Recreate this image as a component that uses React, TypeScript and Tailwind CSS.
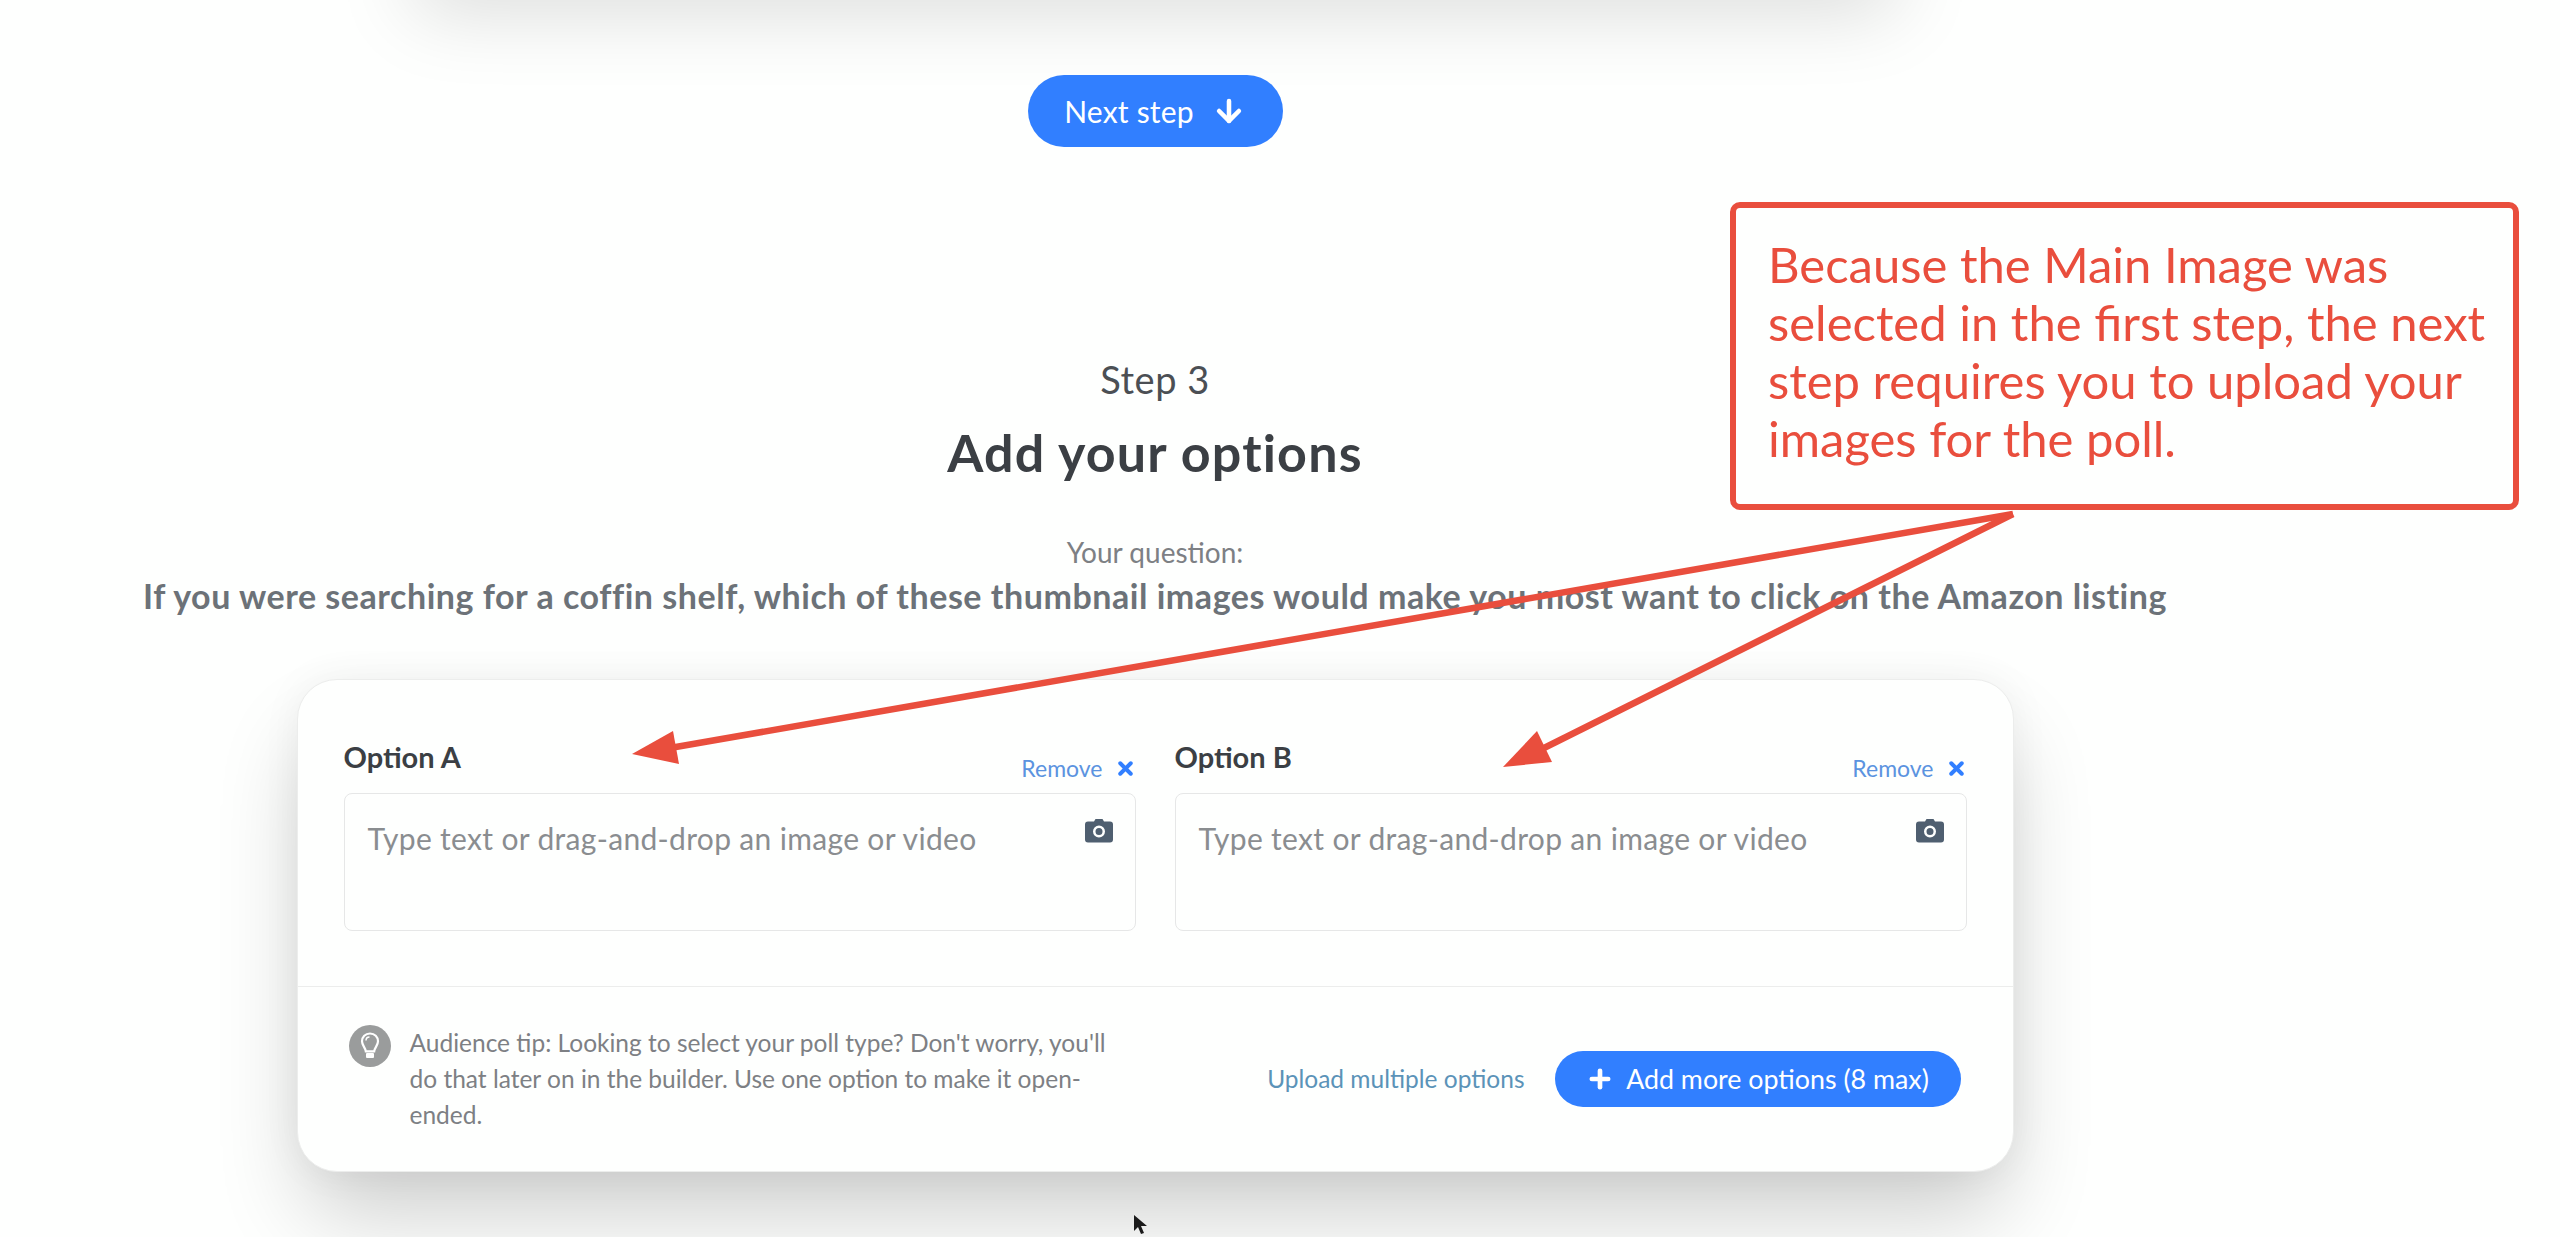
import { ArrowDown, Plus, X } from "lucide-react";

function Camera() {
  return (
    <svg width="28" height="25" viewBox="0 0 28 25" className="shrink-0">
      <path
        fill="#4f5f70"
        fillRule="evenodd"
        d="M9 3.5 10.5 1h7L19 3.5h6A3 3 0 0 1 28 6.500v15a3 3 0 0 1-3 3H3a3 3 0 0 1-3-3v-15a3 3 0 0 1 3-3h6ZM14 7.500a6 6 0 1 0 0 12 6 6 0 0 0 0-12Zm0 2.500a3.500 3.500 0 1 1 0 7 3.500 3.500 0 0 1 0-7Z"
      />
    </svg>
  );
}

function Bulb() {
  return (
    <svg width="42" height="42" viewBox="0 0 42 42" className="shrink-0">
      <circle cx="21" cy="21" r="21" fill="#9a9c9c" />
      <path
        d="M21 8.500c-4.700 0-8 3.500-8 7.800 0 4 3.200 6 3.800 10h8.400c.6-4 3.800-6 3.800-10 0-4.300-3.300-7.800-8-7.800Z"
        fill="none"
        stroke="#fff"
        strokeWidth="2.200"
      />
      <rect x="17" y="28" width="8" height="5" rx="1" fill="#fff" />
      <path d="M17 15.500c0-2 1.500-3.500 3.500-3.500" fill="none" stroke="#fff" strokeWidth="1.500" />
    </svg>
  );
}

function OptionField({ name }: { name: string }) {
  return (
    <div>
      <div className="flex h-[54px] items-start justify-between">
        <span className="text-[29px] leading-[36px] font-bold text-[#3b3f44]">{name}</span>
        <span className="mt-[14px] flex items-center gap-[12px] text-[23px] leading-[30px] text-[#5b93e0]">
          Remove
          <X size={21} strokeWidth={4.5} className="text-[#317fff]" />
        </span>
      </div>
      <div className="flex h-[138px] items-start justify-between rounded-[8px] border border-[#e6e7e7] pt-[24px] pr-[22px] pl-[23px]">
        <span className="text-[30px] leading-[40px] tracking-[0.33px] text-[#8a8d90]">
          Type text or drag-and-drop an image or video
        </span>
        <Camera />
      </div>
    </div>
  );
}

export default function App() {
  return (
    <div className="relative h-[1237px] w-[2560px] overflow-hidden bg-[#fefffe] font-['Lato',sans-serif]">
      <div className="flex w-[2310px] flex-col items-center">
        {/* bottom edge of the previous step's card, above the fold */}
        <div className="mt-[-130px] h-[100px] w-[1500px] shadow-[0_50px_80px_-10px_rgba(0,0,0,0.15)]" />

        <button className="mt-[105px] flex h-[72px] w-[255px] items-center justify-center gap-[18px] rounded-full bg-[#317fff] text-[30px] tracking-[0.2px] text-white">
          Next step
          <ArrowDown size={34} strokeWidth={3.2} />
        </button>

        <div className="mt-[208px] text-[38px] leading-[48px] tracking-[0.5px] text-[#4b4f54]">Step 3</div>
        <h1 className="mt-[19px] text-[52px] leading-[60px] tracking-[1.2px] font-bold text-[#3b3f44]">Add your options</h1>
        <div className="mt-[52px] text-[28px] leading-[36px] text-[#7d8084]">Your question:</div>
        <div className="mt-[4px] text-[34px] leading-[44px] tracking-[0.53px] font-bold whitespace-nowrap text-[#6c7278]">
          If you were searching for a coffin shelf, which of these thumbnail images would make you most want to click on the Amazon listing
        </div>

        <div className="mt-[61px] w-[1717px] rounded-[40px] border border-[#ecedec] bg-[#fefffe] shadow-[0_50px_90px_-10px_rgba(0,0,0,0.2),0_0_40px_rgba(0,0,0,0.05)]">
          <div className="grid grid-cols-2 gap-[39px] px-[46px] pt-[59px] pb-[55px]">
            <OptionField name="Option A" />
            <OptionField name="Option B" />
          </div>
          <div className="flex h-[185px] items-center justify-between border-t border-[#ecedec] pr-[52px] pl-[51px]">
            <div className="flex w-[773px] items-start gap-[19px]">
              <Bulb />
              <p className="text-[24.5px] leading-[36px] text-[#7d8084]">
                Audience tip: Looking to select your poll type? Don't worry, you'll do that later on in the builder. Use one option to make it open-ended.
              </p>
            </div>
            <div className="flex items-center gap-[30px]">
              <span className="text-[24.5px] text-[#5b93b8]">Upload multiple options</span>
              <button className="flex h-[56px] w-[406px] items-center justify-center gap-[12px] rounded-full bg-[#317fff] text-[26.8px] text-white">
                <Plus size={28} strokeWidth={4} />
                Add more options (8 max)
              </button>
            </div>
          </div>
        </div>
      </div>

      {/* annotation over the screenshot */}
      <div className="absolute top-[202px] left-[1730px] h-[308px] w-[789px] rounded-[10px] border-[6px] border-[#e94e3d] pt-[27px] pl-[32px] text-[49px] leading-[58px] text-[#e94e3d]">
        Because the Main Image was selected in the first step, the next step requires you to upload your images for the poll.
      </div>
      <svg width="2560" height="1237" className="pointer-events-none absolute top-0 left-0">
        <g stroke="#e94e3d" strokeWidth="6.500" fill="none">
          <path d="M2013 514 670 748" />
          <path d="M2013 514 1540 750" />
        </g>
        <polygon points="632,754 673,731 679,764" fill="#e94e3d" />
        <polygon points="1503,767 1537,731 1552,762" fill="#e94e3d" />
      </svg>

      {/* mouse pointer */}
      <svg width="16" height="22" viewBox="0 0 16 22" className="absolute top-[1214px] left-[1133px]">
        <path d="M1 1v16l4-4 3 7 3-1-3-7h6Z" fill="#1a1a1a" />
      </svg>
    </div>
  );
}
